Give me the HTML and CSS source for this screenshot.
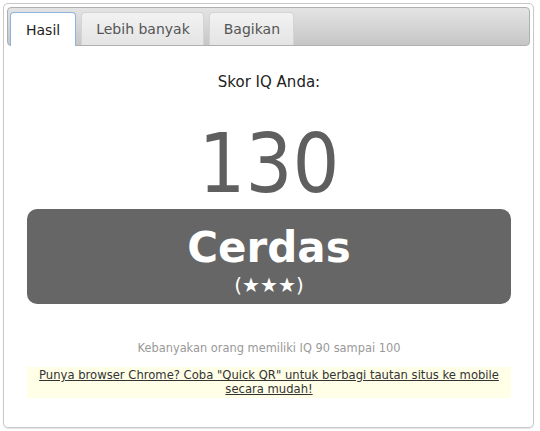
FILE: index.html
```html
<!DOCTYPE html>
<html>
<head>
<meta charset="utf-8">
<link rel="stylesheet" href="styles.css">
</head>
<body>
<div class="widget">
  <ul class="tabs">
    <li class="tab active">Hasil</li>
    <li class="tab">Lebih banyak</li>
    <li class="tab">Bagikan</li>
  </ul>
  <div class="panel">
    <div class="label">Skor IQ Anda:</div>
    <div class="score">130</div>
    <div class="rank">
      <div class="rank-name">Cerdas</div>
      <div class="rank-stars">(★★★)</div>
    </div>
    <div class="note">Kebanyakan orang memiliki IQ 90 sampai 100</div>
    <div class="promo"><a href="#">Punya browser Chrome? Coba "Quick QR" untuk berbagi tautan situs ke mobile secara mudah!</a></div>
  </div>
</div>
</body>
</html>
```
FILE: styles.css
```css
html, body {
  margin: 0;
  padding: 0;
  background: #fff;
}
body {
  font-family: "DejaVu Sans", Verdana, sans-serif;
}
.widget {
  margin: 3px;
  width: 523px;
  height: 417px;
  border: 1px solid #c8c8c8;
  border-radius: 5px;
  padding: 3px;
  box-shadow: 0 1px 1px #e4e4e4;
}
.tabs {
  list-style: none;
  margin: 0;
  padding: 4px 2px 0;
  height: 33px;
  display: flex;
  gap: 5px;
  border: 1px solid #b0b0b0;
  border-radius: 4px;
  background: linear-gradient(#e4e4e4, #c6c6c6);
}
.tab {
  height: 32px;
  padding: 0 13px 0 14px;
  display: flex;
  align-items: center;
  font-size: 14px;
  color: #555;
  background: linear-gradient(#f2f2f2, #e4e4e4);
  border: 1px solid #d4d4d4;
  border-bottom: none;
  border-radius: 4px 4px 0 0;
}
.tab.active {
  background: #fff;
  color: #222;
  border: 1px solid #8eb2df;
  border-bottom: none;
  height: 33px;
  margin-bottom: -1px;
  padding: 0 15px;
}
.panel {
  padding: 0 19px 0 20px;
  text-align: center;
}
.label {
  margin-top: 27px;
  font-size: 15px;
  color: #222;
  line-height: 19px;
}
.score {
  margin-top: 26px;
  font-family: "DejaVu Sans Condensed", "DejaVu Sans", sans-serif;
  font-size: 82px;
  line-height: 91px;
  color: #5f5f5f;
}
.rank {
  margin-top: 0;
  background: #666;
  border-radius: 10px;
  height: 95px;
  color: #fff;
  box-sizing: border-box;
  padding-top: 15px;
}
.rank-name {
  font-size: 42px;
  font-weight: bold;
  line-height: 48px;
}
.rank-stars {
  font-size: 20px;
  line-height: 26px;
}
.note {
  margin-top: 37px;
  font-size: 11.4px;
  color: #999;
  line-height: 15px;
}
.promo {
  margin-top: 11px;
  background: #ffffe8;
  padding: 1px 8px 2px;
  font-size: 11.6px;
  line-height: 14px;
}
.promo a {
  color: #333;
  text-decoration: underline;
}
```
